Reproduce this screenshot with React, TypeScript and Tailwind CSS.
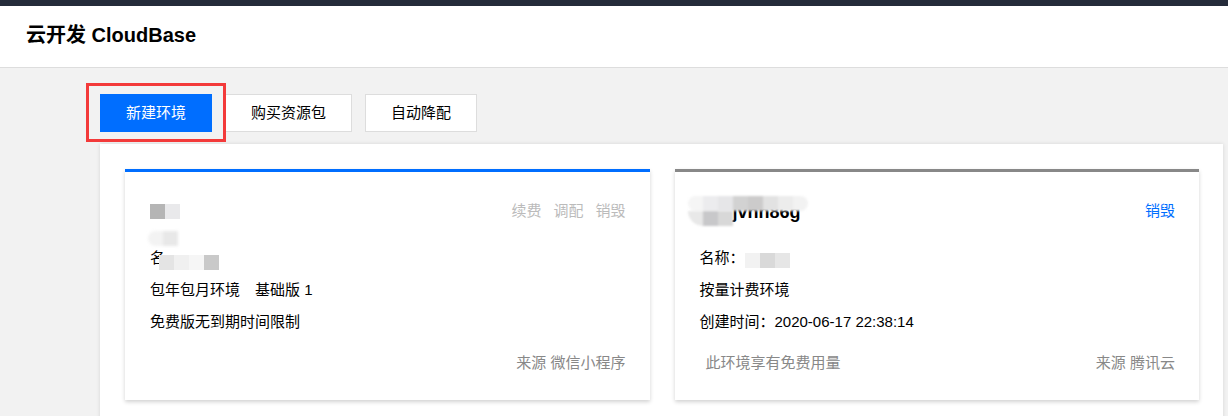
import React from 'react';

const font = { fontFamily: '"Liberation Sans", Arial, "Noto Sans CJK SC", sans-serif' };

// 打码用的马赛克块
function Mosaic({ cells, className = '' }: { cells: string[]; className?: string }) {
  return (
    <span className={`flex ${className}`}>
      {cells.map((c, i) => (
        <span key={i} className="w-[15px] h-[15px]" style={{ background: c }} />
      ))}
    </span>
  );
}

interface EnvCard {
  accent: string;
  title: React.ReactNode;
  actions: { label: string; active?: boolean }[];
  name: React.ReactNode;
  lines: string[];
  tip?: string;
  source: string;
}

const cards: EnvCard[] = [
  {
    accent: 'border-[#006eff]',
    title: <Mosaic cells={['#b5b5b5', '#e9e9eb']} className="mt-[1px]" />,
    actions: [{ label: '续费' }, { label: '调配' }, { label: '销毁' }],
    name: (
      <span className="relative flex items-center">
        <span>名</span>
        <span className="absolute -left-[2px] -top-[16px] flex blur-[1.5px] rounded-l-full overflow-hidden">
          <Mosaic cells={['#f3f3f3', '#e8e8e8']} />
        </span>
        <Mosaic cells={['#e4e4e4', '#f0f0f0', '#f6f6f6', '#c9c9c9']} className="-ml-[6px] mt-[8px]" />
      </span>
    ),
    lines: ['包年包月环境\u3000基础版 1', '免费版无到期时间限制'],
    source: '来源 微信小程序',
  },
  {
    accent: 'border-[#888888]',
    title: (
      <span className="relative flex items-center">
        <span className="pl-[33px] text-[18px] font-bold text-black leading-[24px] mt-[2px]">jvnn86g</span>
        <span className="absolute left-[-12px] top-[-2px] flex rounded-full blur-[1px] overflow-hidden">
          <Mosaic cells={['#f5f5f5', '#ececee', '#e6e6e8', '#d2d2d2', '#cccbcb', '#e2e2e2', '#ececec', '#f2f2f2']} />
        </span>
        <span className="absolute left-[-12px] top-[13px] flex rounded-bl-full blur-[1px] overflow-hidden">
          <Mosaic cells={['#e8e8e8', '#c8c8ca', '#d8d8d8']} />
        </span>
      </span>
    ),
    actions: [{ label: '销毁', active: true }],
    name: (
      <span className="flex items-center">
        <span>名称：</span>
        <Mosaic cells={['#f2f2f2', '#d9d9d9', '#e6e6e6']} className="mt-[4px] blur-[0.5px]" />
      </span>
    ),
    lines: ['按量计费环境', '创建时间：2020-06-17 22:38:14'],
    tip: '此环境享有免费用量',
    source: '来源 腾讯云',
  },
];

export default function App() {
  return (
    <div className="h-[416px] w-[1228px] overflow-hidden bg-[#f2f2f2] text-[15px] text-[#000]" style={font}>
      <div className="h-[6px] bg-[#242b3a]" />
      <header className="h-[62px] bg-white border-b border-[#dddddd] flex items-center pl-[26px]">
        <h1 className="text-[20px] font-bold text-black mt-[-3px]">云开发 CloudBase</h1>
      </header>

      {/* 操作按钮 */}
      <div className="flex gap-[13px] pl-[100px] pt-[26px]">
        <div className="relative">
          <button className="w-[112px] h-[38px] bg-[#006eff] text-white">新建环境</button>
          <span className="absolute -left-[14px] -top-[11px] w-[140px] h-[59px] border-[3px] border-[#f33a3a]" />
        </div>
        <button className="w-[127px] h-[38px] bg-white border border-[#dddddd] text-black">购买资源包</button>
        <button className="w-[112px] h-[38px] bg-white border border-[#dddddd] text-black">自动降配</button>
      </div>

      {/* 环境列表 */}
      <div className="ml-[100px] mt-[12px] w-[1123px] h-[300px] bg-white shadow-[0_0_4px_rgba(0,0,0,0.12)] pt-[25px] pl-[25px] pr-[24px]">
        <div className="grid grid-cols-2 gap-[25px]">
          {cards.map((card, i) => (
            <div
              key={i}
              className={`h-[231px] bg-white border-t-[3px] ${card.accent} shadow-[0_2px_4px_rgba(0,0,0,0.18)] pt-[27px] pl-[25px] pr-[24px] pb-[25px]`}
            >
              <div className="h-[24px] flex items-center justify-between">
                {card.title}
                <div className="flex gap-[12px] leading-[24px]">
                  {card.actions.map((a) => (
                    <span key={a.label} className={a.active ? 'text-[#006eff]' : 'text-[#bbbbbb]'}>
                      {a.label}
                    </span>
                  ))}
                </div>
              </div>
              <div className="mt-[19px]">
                <div className="h-[32px] flex items-center">{card.name}</div>
                {card.lines.map((l) => (
                  <div key={l} className="h-[32px] flex items-center whitespace-pre">
                    {l}
                  </div>
                ))}
              </div>
              <div className="mt-[13px] h-[24px] flex items-center justify-between text-[#888888]">
                <span className="pl-[6px]">{card.tip}</span>
                <span>{card.source}</span>
              </div>
            </div>
          ))}
        </div>
      </div>
    </div>
  );
}
